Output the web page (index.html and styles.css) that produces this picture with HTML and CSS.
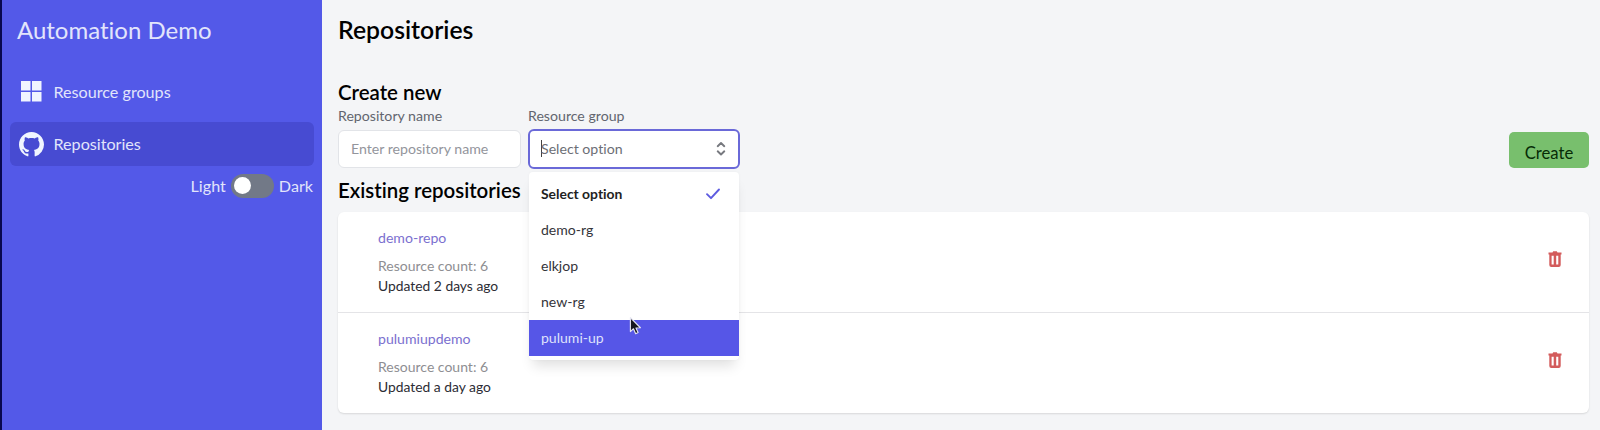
FILE: index.html
```html
<!DOCTYPE html>
<html lang="en">
<head>
<meta charset="utf-8">
<title>Automation Demo</title>
<link rel="stylesheet" href="styles.css">
</head>
<body>
<div class="app">
  <aside class="sidebar">
    <div class="brand"><span>Automation Demo</span></div>
    <nav class="nav">
      <a class="nav-item">
        <svg class="nav-icon" viewBox="0 0 25 25"><path fill="currentColor" d="M2 2h9.500v9.500H2zM13 2h9.500v9.500H13zM2 13h9.500v9.500H2zM13 13h9.500v9.500H13z"/></svg>
        <span>Resource groups</span>
      </a>
      <a class="nav-item active">
        <svg class="nav-icon" viewBox="0 0 16 16"><path fill="currentColor" d="M8 0C3.580 0 0 3.580 0 8c0 3.540 2.290 6.530 5.470 7.590.4.070.55-.17.55-.38 0-.19-.01-.82-.01-1.490-2.010.37-2.530-.49-2.690-.94-.09-.23-.48-.94-.82-1.130-.28-.15-.68-.52-.01-.53.63-.01 1.080.58 1.230.82.72 1.210 1.870.87 2.330.66.070-.52.28-.87.510-1.070-1.780-.2-3.640-.89-3.640-3.950 0-.87.310-1.590.82-2.150-.08-.2-.36-1.020.08-2.120 0 0 .67-.21 2.200.82.64-.18 1.320-.27 2-.27s1.360.09 2 .27c1.530-1.040 2.200-.82 2.200-.82.44 1.100.16 1.920.08 2.120.51.56.82 1.270.82 2.150 0 3.070-1.870 3.750-3.650 3.950.29.25.54.73.54 1.480 0 1.070-.01 1.930-.01 2.200 0 .21.15.46.55.38A8.010 8.010 0 0 0 16 8c0-4.420-3.580-8-8-8z"/></svg>
        <span>Repositories</span>
      </a>
    </nav>
    <div class="theme"><span>Light</span><i class="switch"></i><span>Dark</span></div>
  </aside>
  <main class="main">
    <h1 class="title"><span>Repositories</span></h1>
    <h2 class="section"><span>Create new</span></h2>
    <div class="form">
      <div class="field name-field">
        <label class="label"><span>Repository name</span></label>
        <div class="control"><span>Enter repository name</span></div>
      </div>
      <div class="field group-field">
        <label class="label"><span>Resource group</span></label>
        <div class="control select">
          <i class="caret"></i><span>Select option</span>
          <svg class="chevrons" viewBox="0 0 20 20" fill="none" stroke="currentColor" stroke-width="1.900" stroke-linecap="round" stroke-linejoin="round"><path d="M6.700 8.200 10 5l3.300 3.200M6.700 13.300 10 16.500l3.300-3.200"/></svg>
        </div>
        <div class="menu">
          <div class="option selected"><span>Select option</span>
            <svg class="check" viewBox="0 0 20 20" fill="none" stroke="currentColor" stroke-width="1.900" stroke-linecap="round" stroke-linejoin="round"><path d="M4 11.200 8 15.200 16 6.500"/></svg>
          </div>
          <div class="option"><span>demo-rg</span></div>
          <div class="option"><span>elkjop</span></div>
          <div class="option"><span>new-rg</span></div>
          <div class="option hovered"><span>pulumi-up</span></div>
          <svg class="pointer" viewBox="0 0 14 20"><path fill="#16161f" stroke="#e6e6f2" stroke-width="1.200" stroke-linejoin="round" d="M1.500 1v15l3.300-3 2.400 5.300 2.600-1.200-2.300-5 4.800-.2z"/></svg>
        </div>
      </div>
      <button class="create">Create</button>
    </div>
    <h2 class="section existing"><span>Existing repositories</span></h2>
    <div class="list">
      <div class="repo">
        <div class="info">
          <a class="repo-name"><span>demo-repo</span></a>
          <span class="count">Resource count: 6</span>
          <span class="updated">Updated 2 days ago</span>
        </div>
        <svg class="trash" viewBox="0 0 14 16"><path fill="currentColor" fill-rule="evenodd" d="M4.500 1.500 5.200.2h3.600l.7 1.300h4v1.900h-.8V14a2 2 0 0 1-2 2H3.300a2 2 0 0 1-2-2V3.400H.5V1.500zM3.600 4.800v8.600h2.100V4.800zM8.200 4.800v8.600h2.100V4.800z"/></svg>
      </div>
      <div class="repo">
        <div class="info">
          <a class="repo-name"><span>pulumiupdemo</span></a>
          <span class="count">Resource count: 6</span>
          <span class="updated">Updated a day ago</span>
        </div>
        <svg class="trash" viewBox="0 0 14 16"><path fill="currentColor" fill-rule="evenodd" d="M4.500 1.500 5.200.2h3.600l.7 1.300h4v1.900h-.8V14a2 2 0 0 1-2 2H3.300a2 2 0 0 1-2-2V3.400H.5V1.500zM3.600 4.800v8.600h2.100V4.800zM8.200 4.800v8.600h2.100V4.800z"/></svg>
      </div>
    </div>
  </main>
</div>
</body>
</html>
```
FILE: styles.css
```css
* { box-sizing: border-box; }
body { margin: 0; font-family: Lato, "Liberation Sans", sans-serif; font-variant-ligatures: none; color: #000; }
.app { display: flex; height: 430px; overflow: hidden; background: #f4f5f7; }
.sidebar { width: 322px; border-left: 2px solid #080850; background: #5359e8; color: #e2e5fb; padding: 10px 8px; }
.brand { font-size: 24px; line-height: 40px; padding-left: 7px; }
.nav { display: flex; flex-direction: column; gap: 8px; margin-top: 20px; }
.nav-item { display: flex; align-items: center; gap: 9.500px; height: 44px; padding-left: 9px; border-radius: 6px; font-size: 16.150px; }
.nav-item span, .theme span { padding-bottom: 2px; }
.nav-icon { width: 25px; height: 25px; color: #f0f5ff; }
.nav-item:first-child .nav-icon { margin-bottom: 1px; }
.nav-item.active { background: #474bd2; }
.theme { display: flex; align-items: center; justify-content: flex-end; gap: 5px; height: 24px; margin-top: 8px; padding-right: 1px; font-size: 16.150px; }
.switch { width: 43px; height: 24px; border-radius: 12px; background: #727987; padding: 3px; }
.switch::before { content: ""; display: block; width: 17px; height: 17px; border-radius: 50%; background: #fff; }
.main { flex: 1; padding: 10px 11px 0 16px; }
.title { margin: 0; font-size: 24.750px; line-height: 40px; font-weight: 600; }
.section { margin: 28px 0 0; font-size: 20.450px; line-height: 28px; font-weight: 600; }
.form { display: flex; gap: 7px; height: 63px; }
.field { position: relative; }
.label { display: block; font-size: 14.150px; line-height: 20px; color: #62656f; }
.name-field { width: 183px; }
.group-field { width: 212px; }
.control { display: flex; align-items: center; height: 38px; margin-top: 4px; padding: 0 12px 2px; border: 1px solid #e2e4e8; border-radius: 6px; background: #fff; font-size: 14.150px; color: #93959c; }
.select { height: 40px; margin-top: 3px; padding: 0 7px 2px 11px; border: 2px solid #6a69d8; color: #6c6e75; }
.caret { width: 1px; height: 17px; margin-right: -1px; background: #444; }
.chevrons { width: 20px; height: 20px; margin-left: auto; color: #77797f; }
.menu { position: absolute; z-index: 2; top: 66px; left: 1px; width: 210px; padding: 4px 0; border-radius: 4px; background: #fff; box-shadow: 0 10px 12px -4px rgba(0,0,0,.12), 0 0 3px rgba(0,0,0,.04); }
.option { display: flex; align-items: center; justify-content: space-between; height: 36px; padding: 0 16px 1.500px 12px; font-size: 14.050px; color: #35353a; }
.option.selected { font-weight: 700; font-size: 13.900px; color: #222; }
.option.hovered { background: #5656e7; color: #dfe1fb; }
.check { width: 20px; height: 20px; color: #5d5be0; }
.pointer { position: absolute; left: 100px; top: 144px; width: 13px; height: 20px; }
.create { align-self: flex-start; width: 80px; height: 36px; margin: 26px 0 0 auto; padding: 5px 0 0; border: 0; border-radius: 5px; background: #78bf6d; font: 16.700px Lato, sans-serif; color: #062b06; }
.existing { margin-top: 7px; }
.list { margin-top: 8px; border-radius: 6px; background: #fff; box-shadow: 0 1px 2px rgba(0,0,0,.12); }
.repo { display: flex; justify-content: space-between; height: 100px; padding: 16px 27px 0 40px; }
.repo + .repo { border-top: 1px solid #e4e4e7; height: 101px; }
.info { display: flex; flex-direction: column; font-size: 14px; line-height: 20px; }
.repo-name { color: #7b70cf; font-size: 14.100px; margin-bottom: 8px; }
.count { color: #8e8e92; }
.updated { color: #2c2c34; font-size: 13.850px; }
.trash { width: 14px; height: 16px; margin-top: 23px; color: #d35b5b; }
```
